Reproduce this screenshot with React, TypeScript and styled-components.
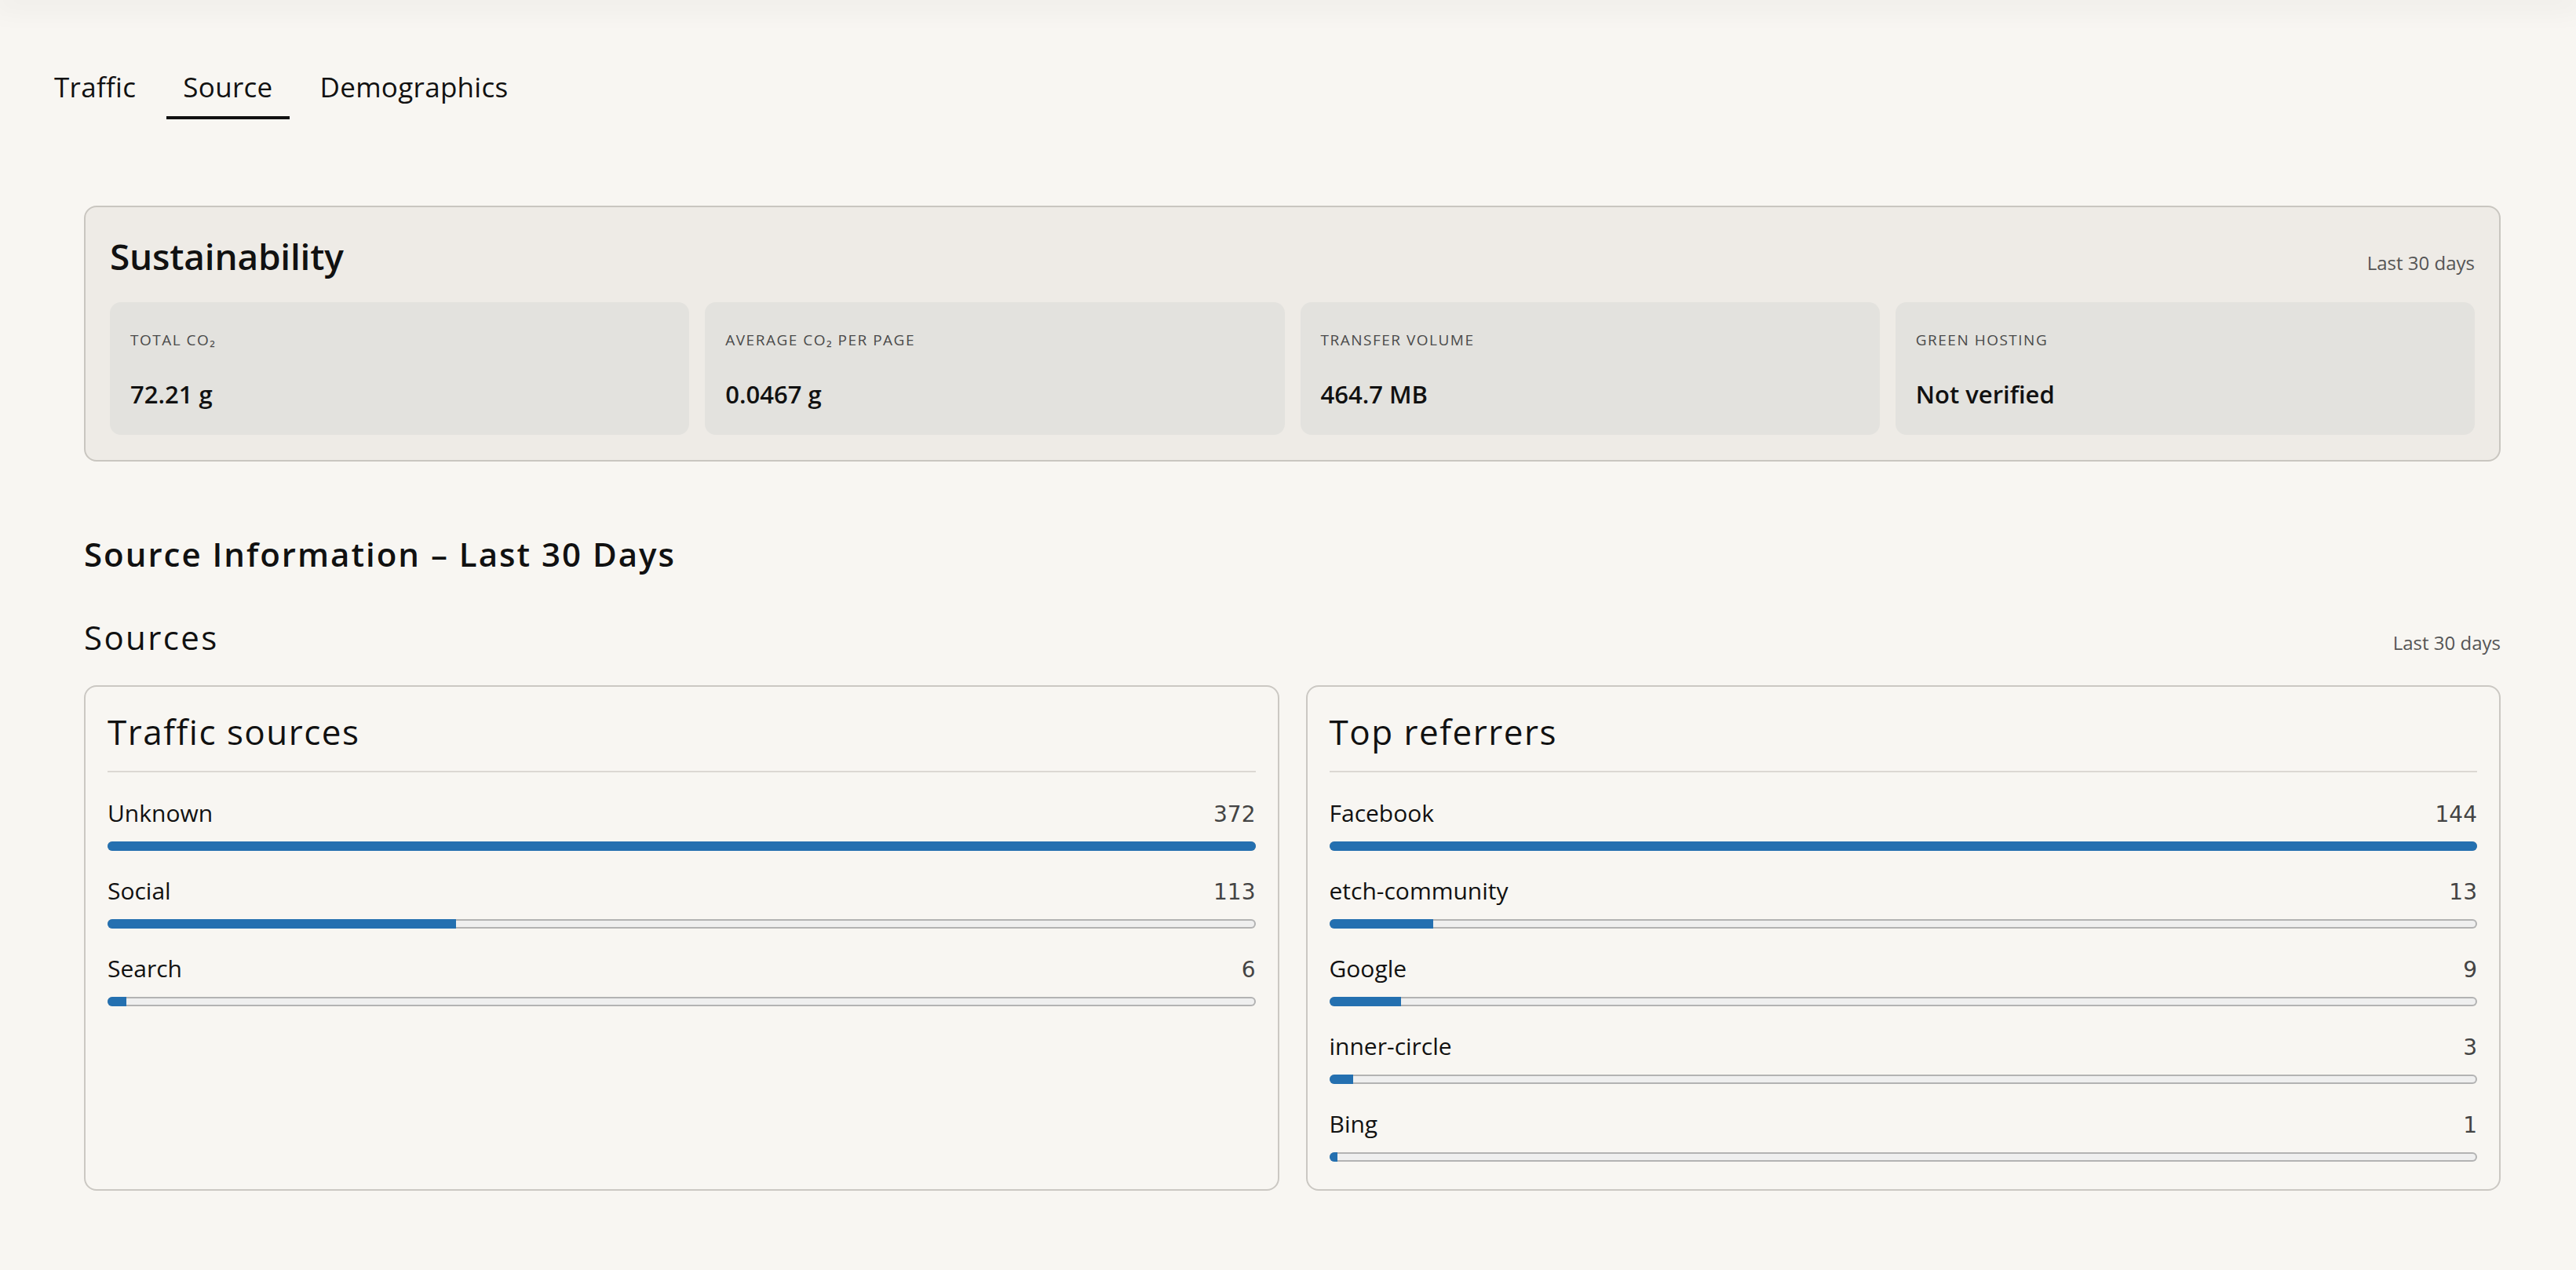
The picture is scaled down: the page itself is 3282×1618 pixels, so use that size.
import React, { useState } from 'react';
import styled, { createGlobalStyle } from 'styled-components';

const GlobalStyle = createGlobalStyle`
  html, body {
    margin: 0;
    padding: 0;
    background-color: #f8f6f2;
  }
  body {
    font-family: 'Open Sans', 'Noto Sans', sans-serif;
    color: #111;
  }
  * {
    box-sizing: border-box;
  }
`;

const Page = styled.div`
  min-height: 1618px;
  background-color: #f8f6f2;
`;

const TopShade = styled.div`
  height: 0;
  box-shadow: 0 0 36px 10px rgba(0, 0, 0, 0.06);
`;

const TabBar = styled.nav`
  display: flex;
  gap: 18px;
  padding: 89px 48px 0;
`;

const Tab = styled.button<{ $active?: boolean }>`
  font-family: inherit;
  font-size: 35px;
  line-height: 44px;
  letter-spacing: 0.3px;
  color: #111;
  background: none;
  border: none;
  border-bottom: 4px solid ${(p) => (p.$active ? '#111' : 'transparent')};
  padding: 0 21px 15px;
  cursor: pointer;
`;

const Main = styled.main`
  padding: 110px 96px 60px 107px;
`;

const SustainCard = styled.section`
  background-color: #eeebe6;
  border: 2px solid #c9c6c0;
  border-radius: 16px;
  padding: 34px 31px 32px;
`;

const CardHeader = styled.div`
  display: flex;
  justify-content: space-between;
  align-items: baseline;
`;

const SustainTitle = styled.h2`
  margin: 0;
  font-size: 46px;
  line-height: 56px;
  font-weight: 600;
  letter-spacing: -0.2px;
`;

const Period = styled.span`
  font-size: 24px;
  color: #555;
`;

const Tiles = styled.div`
  display: grid;
  grid-template-columns: repeat(4, 1fr);
  gap: 20px;
  margin-top: 31px;
`;

const Tile = styled.div`
  background-color: #e3e2de;
  border-radius: 14px;
  padding: 36px 26px 32px;
`;

const TileLabel = styled.div`
  font-size: 19px;
  line-height: 24px;
  letter-spacing: 1.5px;
  text-transform: uppercase;
  color: #4a4a4a;
  margin-bottom: 37px;
`;

const TileValue = styled.div`
  font-size: 31px;
  line-height: 40px;
  font-weight: 600;
`;

const PageHeading = styled.h2`
  margin: 92px 0 0;
  font-size: 42px;
  line-height: 52px;
  font-weight: 600;
  letter-spacing: 2px;
`;

const SectionHeader = styled.div`
  display: flex;
  justify-content: space-between;
  align-items: baseline;
  margin-top: 54px;
`;

const SectionTitle = styled.h3`
  margin: 0;
  font-size: 42px;
  line-height: 52px;
  font-weight: 500;
  letter-spacing: 2.4px;
`;

const CardGrid = styled.div`
  display: grid;
  grid-template-columns: 1fr 1fr;
  gap: 34px;
  margin-top: 35px;
`;

const ListCard = styled.div`
  border: 2px solid #cbc8c3;
  border-radius: 16px;
  padding: 30px 28px 35px 28px;
`;

const ListTitle = styled.h4`
  margin: 0;
  font-size: 44px;
  line-height: 54px;
  font-weight: 500;
  letter-spacing: 1.5px;
  padding-bottom: 23px;
  border-bottom: 2px solid #dcd8d3;
`;

const Rows = styled.div`
  display: flex;
  flex-direction: column;
  gap: 33px;
  margin-top: 34px;
`;

const Row = styled.div`
  display: flex;
  flex-direction: column;
  gap: 16px;
`;

const RowTop = styled.div`
  display: flex;
  justify-content: space-between;
  align-items: baseline;
`;

const RowLabel = styled.span`
  font-size: 30px;
  line-height: 36px;
`;

const RowCount = styled.span`
  font-family: 'DejaVu Sans', sans-serif;
  font-size: 28px;
  line-height: 36px;
  color: #444;
`;

const Track = styled.div`
  height: 12px;
  border-radius: 6px;
  background-color: #efefef;
  box-shadow: inset 0 0 0 2px #b3b3b3;
  overflow: hidden;
`;

const Fill = styled.div`
  height: 100%;
  background-color: #2470b0;
`;

type Item = { name: string; count: number };

const trafficSources: Item[] = [
  { name: 'Unknown', count: 372 },
  { name: 'Social', count: 113 },
  { name: 'Search', count: 6 },
];

const referrers: Item[] = [
  { name: 'Facebook', count: 144 },
  { name: 'etch-community', count: 13 },
  { name: 'Google', count: 9 },
  { name: 'inner-circle', count: 3 },
  { name: 'Bing', count: 1 },
];

const stats = [
  { label: 'Total CO₂', value: '72.21 g' },
  { label: 'Average CO₂ per page', value: '0.0467 g' },
  { label: 'Transfer volume', value: '464.7 MB' },
  { label: 'Green hosting', value: 'Not verified' },
];

function BarList({ title, items }: { title: string; items: Item[] }) {
  const max = Math.max(...items.map((i) => i.count));
  return (
    <ListCard>
      <ListTitle>{title}</ListTitle>
      <Rows>
        {items.map((item) => (
          <Row key={item.name}>
            <RowTop>
              <RowLabel>{item.name}</RowLabel>
              <RowCount>{item.count}</RowCount>
            </RowTop>
            <Track>
              <Fill style={{ width: `${(item.count / max) * 100}%` }} />
            </Track>
          </Row>
        ))}
      </Rows>
    </ListCard>
  );
}

function App() {
  const [tab, setTab] = useState('Source');

  return (
    <>
      <GlobalStyle />
      <Page>
        <TopShade />
        <TabBar>
          {['Traffic', 'Source', 'Demographics'].map((t) => (
            <Tab key={t} $active={tab === t} onClick={() => setTab(t)}>
              {t}
            </Tab>
          ))}
        </TabBar>
        <Main>
          <SustainCard>
            <CardHeader>
              <SustainTitle>Sustainability</SustainTitle>
              <Period>Last 30 days</Period>
            </CardHeader>
            <Tiles>
              {stats.map((s) => (
                <Tile key={s.label}>
                  <TileLabel>{s.label}</TileLabel>
                  <TileValue>{s.value}</TileValue>
                </Tile>
              ))}
            </Tiles>
          </SustainCard>

          <PageHeading>Source Information – Last 30 Days</PageHeading>
          <SectionHeader>
            <SectionTitle>Sources</SectionTitle>
            <Period>Last 30 days</Period>
          </SectionHeader>
          <CardGrid>
            <BarList title="Traffic sources" items={trafficSources} />
            <BarList title="Top referrers" items={referrers} />
          </CardGrid>
        </Main>
      </Page>
    </>
  );
}

export default App;
